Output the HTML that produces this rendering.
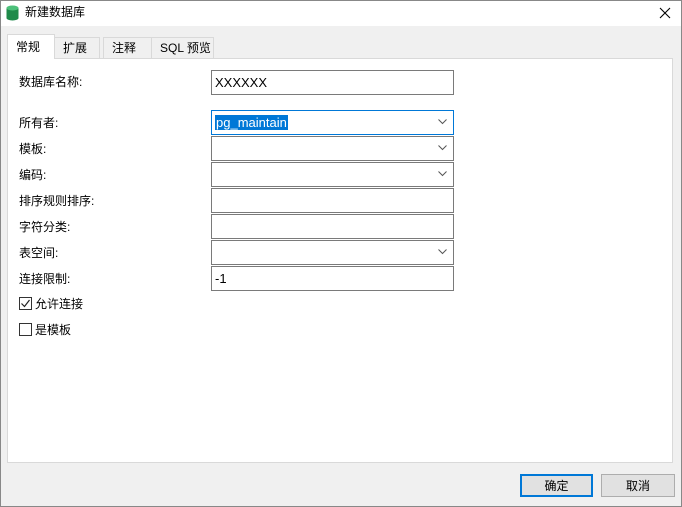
<!DOCTYPE html><html><head><style>
*{box-sizing:border-box}body{margin:0;width:682px;height:507px;background:#f0f0f0;font:12px/14px "Liberation Sans","Noto Sans CJK SC",sans-serif;color:#000;position:relative;overflow:hidden}
.a{position:absolute}
.frame{left:0;top:0;width:682px;height:507px;border:1px solid #888;z-index:5;pointer-events:none}
.title{left:0;top:0;width:682px;height:26px;background:#fff}
.tab{top:37px;height:21px;border:1px solid #d9d9d9;border-bottom:none;padding:3px 0 0 8px;background:#f0f0f0}
.panel{left:7px;top:58px;width:666px;height:405px;background:#fff;border:1px solid #d9d9d9}
.lbl{left:19px}
.f{left:211px;width:243px;height:25px;border:1px solid #7a7a7a;background:#fff;padding:4px 3px;font-size:13px;line-height:15px}
.f svg{position:absolute;right:6px;top:8px}
.cb{left:19px;width:13px;height:13px;border:1px solid #333;background:#fff}
.btn{top:474px;height:23px;border:1px solid #adadad;background:#e1e1e1;text-align:center;padding-top:3px}
</style></head><body>
<div class="a title"></div>
<svg class="a" style="left:6px;top:5px" width="13" height="16"><rect x="0.5" y="3" width="12" height="10" fill="#1f8a4a"/><ellipse cx="6.5" cy="13" rx="6" ry="2.5" fill="#1f8a4a"/><ellipse cx="6.5" cy="3" rx="6" ry="2.5" fill="#4cc07a"/></svg>
<div class="a" style="left:25px;top:5px">新建数据库</div>
<svg class="a" style="left:659px;top:7px" width="12" height="12"><path d="M1 1L11 11M11 1L1 11" stroke="#000" stroke-width="1.1"/></svg>
<div class="a tab" style="left:54px;width:46px">扩展</div>
<div class="a tab" style="left:103px;width:49px">注释</div>
<div class="a tab" style="left:151px;width:63px">SQL 预览</div>
<div class="a panel"></div>
<div class="a tab" style="left:7px;top:34px;width:48px;height:25px;background:#fff;padding-top:5px;z-index:2">常规</div>
<div class="a lbl" style="top:75px">数据库名称:</div>
<div class="a f" style="top:70px">XXXXXX</div>
<div class="a lbl" style="top:116px">所有者:</div>
<div class="a f" style="top:110px;border-color:#0078d7"><span style="background:#0078d7;color:#fff;padding:0 1px">pg_maintain</span><svg width="9" height="6"><path d="M0.5 0.5L4.5 4.5L8.5 0.5" fill="none" stroke="#555"/></svg></div>
<div class="a lbl" style="top:142px">模板:</div>
<div class="a f" style="top:136px"><svg width="9" height="6"><path d="M0.5 0.5L4.5 4.5L8.5 0.5" fill="none" stroke="#555"/></svg></div>
<div class="a lbl" style="top:168px">编码:</div>
<div class="a f" style="top:162px"><svg width="9" height="6"><path d="M0.5 0.5L4.5 4.5L8.5 0.5" fill="none" stroke="#555"/></svg></div>
<div class="a lbl" style="top:194px">排序规则排序:</div>
<div class="a f" style="top:188px"></div>
<div class="a lbl" style="top:220px">字符分类:</div>
<div class="a f" style="top:214px"></div>
<div class="a lbl" style="top:246px">表空间:</div>
<div class="a f" style="top:240px"><svg width="9" height="6"><path d="M0.5 0.5L4.5 4.5L8.5 0.5" fill="none" stroke="#555"/></svg></div>
<div class="a lbl" style="top:272px">连接限制:</div>
<div class="a f" style="top:266px">-1</div>
<div class="a cb" style="top:297px"><svg width="11" height="11" style="position:absolute;left:0;top:0"><path d="M1.5 5.5L4.5 8.5L9.5 2" fill="none" stroke="#222" stroke-width="1.2"/></svg></div>
<div class="a" style="left:35px;top:297px">允许连接</div>
<div class="a cb" style="top:323px"></div>
<div class="a" style="left:35px;top:323px">是模板</div>
<div class="a btn" style="left:520px;width:73px;border:2px solid #0078d7;padding-top:3px">确定</div>
<div class="a btn" style="left:601px;width:74px;padding-top:4px">取消</div>
<div class="a frame"></div>
</body></html>
